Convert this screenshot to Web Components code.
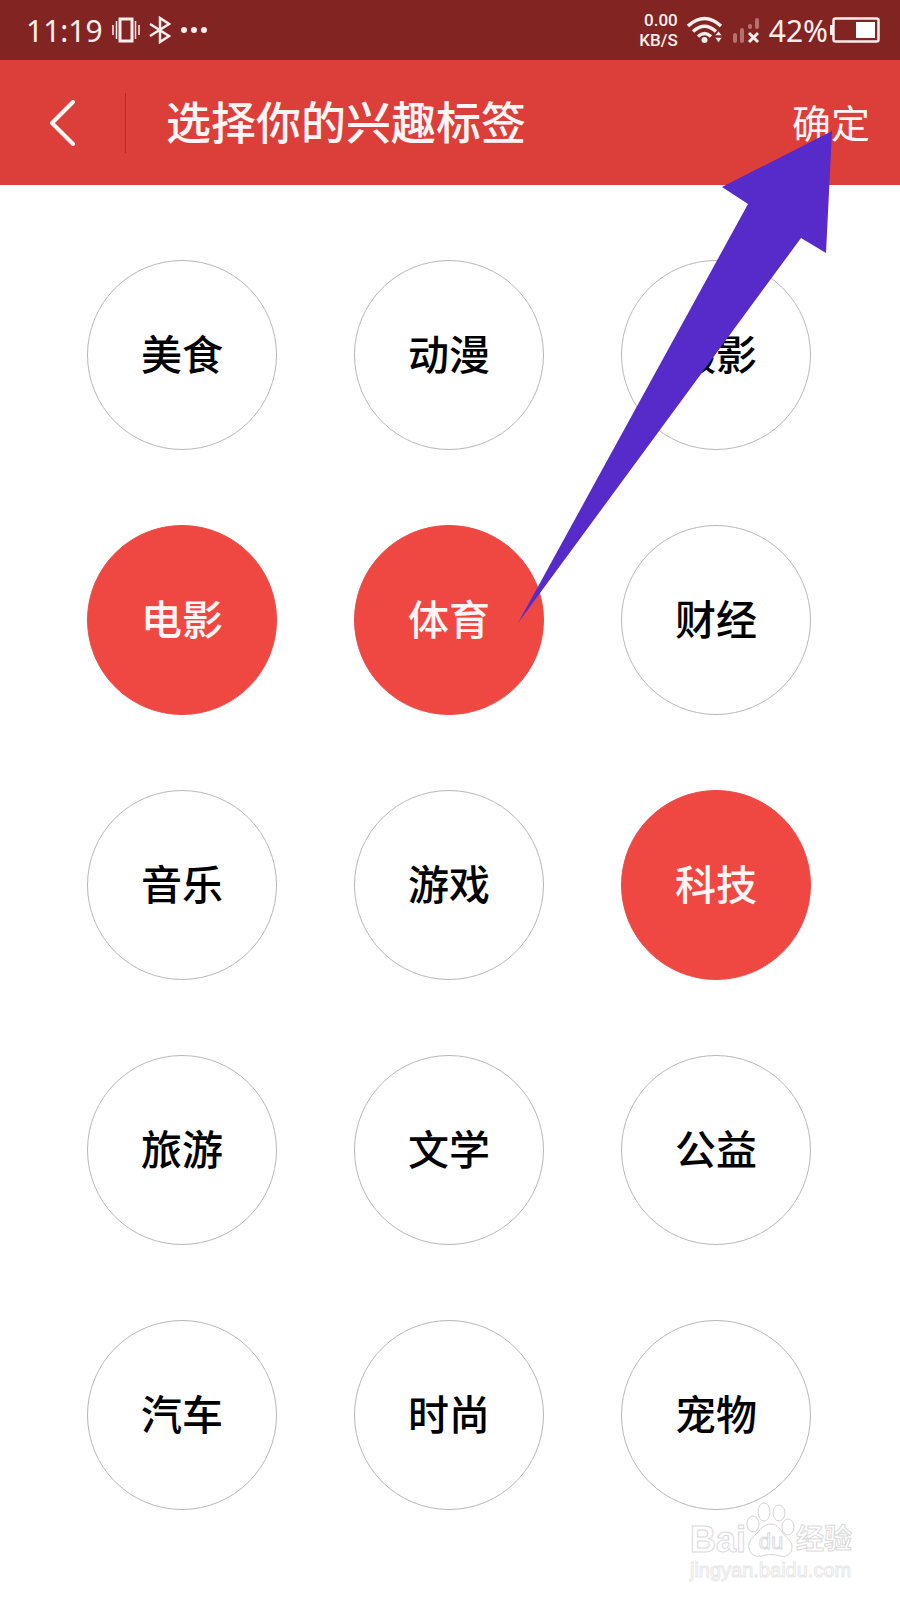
<!DOCTYPE html>
<html lang="zh-CN">
<head>
<meta charset="utf-8">
<meta name="viewport" content="width=device-width, initial-scale=1">
<title>选择你的兴趣标签</title>
<style>
  :root {
    --status: #822522;
    --bar: #dc3f3a;
    --accent: #ef4843;
    --ring: #b8b8b8;
    --arrow: #562bca;
  }

  body {
    margin: 0;
    background: #fff;
    color: #000;
    font-family: "Noto Sans CJK SC", sans-serif;
  }
</style>
</head>
<body>
<interest-page>
  <status-bar slot="top" time="11:19" speed="0.00" unit="KB/S" battery="42%"></status-bar>
  <title-bar slot="top" action="确定">选择你的兴趣标签</title-bar>
  <tag-grid>
    <tag-chip>美食</tag-chip>
    <tag-chip>动漫</tag-chip>
    <tag-chip>摄影</tag-chip>
    <tag-chip selected>电影</tag-chip>
    <tag-chip selected>体育</tag-chip>
    <tag-chip>财经</tag-chip>
    <tag-chip>音乐</tag-chip>
    <tag-chip>游戏</tag-chip>
    <tag-chip selected>科技</tag-chip>
    <tag-chip>旅游</tag-chip>
    <tag-chip>文学</tag-chip>
    <tag-chip>公益</tag-chip>
    <tag-chip>汽车</tag-chip>
    <tag-chip>时尚</tag-chip>
    <tag-chip>宠物</tag-chip>
  </tag-grid>
  <guide-arrow slot="overlay"></guide-arrow>
  <site-mark slot="overlay"></site-mark>
</interest-page>

<script>
// Crea el shadow root de un elemento a partir de su plantilla.
function render(element, html) {
  const template = document.createElement('template');
  template.innerHTML = html;
  element.attachShadow({ mode: 'open' });
  element.shadowRoot.appendChild(template.content.cloneNode(true));
}

// Contenedor general de la pantalla.
class InterestPage extends HTMLElement {
  constructor() {
    super();
    render(this, `
      <style>
        :host {
          position: relative;
          display: flex;
          flex-direction: column;
          min-height: 100vh;
          overflow: hidden;
        }

        main {
          flex: 1;
        }
      </style>
      <slot name="top"></slot>
      <main><slot></slot></main>
      <slot name="overlay"></slot>
    `);
  }
}

// Barra de estado del teléfono.
class StatusBar extends HTMLElement {
  constructor() {
    super();
    render(this, `
      <style>
        :host {
          display: flex;
          align-items: center;
          justify-content: space-between;
          height: 60px;
          padding: 0 20px 0 26px;
          background: var(--status);
          color: #fbeeed;
          font-family: "Noto Sans", sans-serif;
          font-size: 30px;
        }

        .group {
          display: flex;
          align-items: center;
          gap: 9px;
        }

        .rate {
          display: grid;
          text-align: right;
          font-family: Roboto, sans-serif;
          font-size: 17px;
          font-weight: 500;
          line-height: 20px;
        }

        .power {
          display: flex;
          align-items: center;
          gap: 2px;
        }

        svg {
          display: block;
          fill: none;
          stroke: currentColor;
        }
      </style>
      <div class="group">
        <span class="time"></span>
        <svg width="28" height="26" viewBox="0 0 28 26" stroke-width="3" aria-hidden="true">
          <rect x="8" y="2" width="12" height="22"/>
          <path d="M4.500 4v18M23.500 4v18" stroke-width="1.500"/>
          <path d="M1 8v10M27 8v10" stroke-width="1.500"/>
        </svg>
        <svg width="22" height="28" viewBox="0 0 22 28" stroke-width="2.500" aria-hidden="true">
          <path d="M1 8L20 20L11 26V2L20 8L1 20"/>
        </svg>
        <svg width="28" height="8" viewBox="0 0 28 8" aria-hidden="true">
          <g fill="currentColor" stroke="none"><circle cx="4" cy="4" r="3"/><circle cx="14" cy="4" r="3"/><circle cx="24" cy="4" r="3"/></g>
        </svg>
      </div>
      <div class="group">
        <span class="rate"><span class="speed"></span><span class="unit"></span></span>
        <svg width="36" height="28" viewBox="0 0 36 28" stroke-width="3.500" aria-hidden="true">
          <path d="M1 10Q17.500 -5 34 10M6 15.500Q17.500 5 29 15.500M11 20.500Q17.500 14.500 24 20.500"/>
          <circle cx="17.500" cy="24" r="3" fill="currentColor" stroke="none"/>
          <path d="M28 19.500L31.500 15L35 19.500ZM28 21.500L31.500 26.500L35 21.500Z" fill="currentColor" stroke="var(--status)" stroke-width="0.500"/>
        </svg>
        <svg width="28" height="27" viewBox="0 0 28 27" aria-hidden="true">
          <g stroke="#b5716e" stroke-width="4" stroke-linecap="round"><path d="M3 18v6M10 13v11M18 9v1M25 3v7"/></g>
          <path d="M17 16l9 9M26 16l-9 9" stroke-width="3"/>
        </svg>
        <span class="power">
          <span class="battery"></span>
          <svg width="50" height="26" viewBox="0 0 50 26" stroke-width="2.500" aria-hidden="true">
            <rect x="3.500" y="1.500" width="45" height="23" rx="2"/>
            <path d="M1.500 8v10" stroke-width="3"/>
            <rect x="26" y="5" width="19" height="16" fill="#fff" stroke="none"/>
          </svg>
        </span>
      </div>
    `);
  }

  connectedCallback() {
    ['time', 'speed', 'unit', 'battery'].forEach((name) => {
      this.shadowRoot.querySelector('.' + name).textContent = this.getAttribute(name);
    });
  }
}

// Cabecera con volver, título y confirmar.
class TitleBar extends HTMLElement {
  constructor() {
    super();
    render(this, `
      <style>
        :host {
          display: flex;
          align-items: center;
          height: 125px;
          background: var(--bar);
          color: #fff5f4;
        }

        button {
          border: none;
          background: transparent;
          color: inherit;
          font: inherit;
          cursor: pointer;
        }

        .back {
          display: flex;
          align-items: center;
          justify-content: center;
          width: 126px;
          height: 60px;
          padding: 0;
          border-right: 1px solid #a92d29;
        }

        h1 {
          flex: 1;
          margin: 0;
          padding: 0 0 4px 40px;
          font-size: 45px;
          font-weight: 500;
          line-height: 60px;
        }

        .confirm {
          padding: 0 30px 4px;
          font-size: 39px;
          line-height: 60px;
        }
      </style>
      <button class="back" type="button" aria-label="返回">
        <svg width="26" height="46" viewBox="0 0 26 46" fill="none" stroke="currentColor" stroke-width="4" stroke-linecap="round" stroke-linejoin="round" aria-hidden="true">
          <path d="M23 2L2 23L23 44"/>
        </svg>
      </button>
      <h1><slot></slot></h1>
      <button class="confirm" type="button"></button>
    `);
  }

  connectedCallback() {
    this.shadowRoot.querySelector('.confirm').textContent = this.getAttribute('action');
  }
}

class TagGrid extends HTMLElement {
  constructor() {
    super();
    render(this, `
      <style>
        :host {
          display: grid;
          grid-template-columns: repeat(3, 190px);
          justify-content: space-between;
          row-gap: 75px;
          padding: 75px 89px 75px 87px;
        }
      </style>
      <slot></slot>
    `);
  }
}

// Etiqueta redonda que se puede marcar y desmarcar.
class TagChip extends HTMLElement {
  static get observedAttributes() {
    return ['selected'];
  }

  constructor() {
    super();
    render(this, `
      <style>
        :host {
          display: block;
        }

        button {
          display: block;
          box-sizing: border-box;
          width: 100%;
          aspect-ratio: 1;
          padding: 0 0 6px;
          border: 1px solid var(--ring);
          border-radius: 50%;
          background: #fff;
          color: #000;
          font: inherit;
          font-size: 41px;
          font-weight: 500;
          line-height: 60px;
          cursor: pointer;
        }

        :host([selected]) button {
          border-color: var(--accent);
          background: var(--accent);
          color: #fff5f4;
        }
      </style>
      <button type="button" aria-pressed="false"><slot></slot></button>
    `);
    this.button = this.shadowRoot.querySelector('button');
    this.button.addEventListener('click', () => this.toggleAttribute('selected'));
  }

  attributeChangedCallback() {
    this.button.setAttribute('aria-pressed', String(this.hasAttribute('selected')));
  }
}

// Flecha que señala el botón de confirmar.
class GuideArrow extends HTMLElement {
  constructor() {
    super();
    render(this, `
      <style>
        :host {
          position: absolute;
          top: 131px;
          right: 68px;
          pointer-events: none;
        }

        svg {
          display: block;
        }
      </style>
      <svg width="314" height="492" viewBox="0 0 314 492" aria-hidden="true">
        <path d="M314 0L204 56L230 73L0 492L283 107L308 122Z" fill="var(--arrow)"/>
      </svg>
    `);
  }
}

// Marca de agua en la esquina inferior.
class SiteMark extends HTMLElement {
  constructor() {
    super();
    render(this, `
      <style>
        :host {
          position: absolute;
          right: 48px;
          bottom: 18px;
          display: grid;
          color: #fff;
          font-family: "Liberation Sans", "Noto Sans CJK SC", sans-serif;
          -webkit-text-stroke: 1px #dadada;
          pointer-events: none;
        }

        .brand {
          display: flex;
          align-items: flex-end;
          font-size: 36px;
          font-weight: 700;
          line-height: 36px;
        }

        .paw {
          display: grid;
          justify-items: center;
          align-items: end;
        }

        .paw > * {
          grid-area: 1 / 1;
        }

        .du {
          font-size: 22px;
          font-weight: 400;
          line-height: 32px;
        }

        .cn {
          font-size: 28px;
        }

        .site {
          font-size: 20px;
          line-height: 24px;
          -webkit-text-stroke: 1px #e8e8e8;
        }
      </style>
      <div class="brand">
        <span>Bai</span>
        <span class="paw">
          <svg width="50" height="56" viewBox="0 0 50 56" fill="#fff" stroke="#d4d4d4" aria-hidden="true">
            <ellipse cx="7" cy="22" rx="6" ry="8"/>
            <ellipse cx="18" cy="10" rx="6" ry="9"/>
            <ellipse cx="33" cy="11" rx="6" ry="8"/>
            <ellipse cx="42" cy="25" rx="6" ry="8"/>
            <path d="M25 22C17 22 15 28 9 33C4 38 2 42 3 46C4 53 10 55 15 54C22 52 28 52 34 54C41 56 46 51 46 45C46 39 41 36 36 30C33 25 30 22 25 22Z"/>
          </svg>
          <span class="du">du</span>
        </span>
        <span class="cn">经验</span>
      </div>
      <span class="site">jingyan.baidu.com</span>
    `);
  }
}

customElements.define('interest-page', InterestPage);
customElements.define('status-bar', StatusBar);
customElements.define('title-bar', TitleBar);
customElements.define('tag-grid', TagGrid);
customElements.define('tag-chip', TagChip);
customElements.define('guide-arrow', GuideArrow);
customElements.define('site-mark', SiteMark);
</script>
</body>
</html>
